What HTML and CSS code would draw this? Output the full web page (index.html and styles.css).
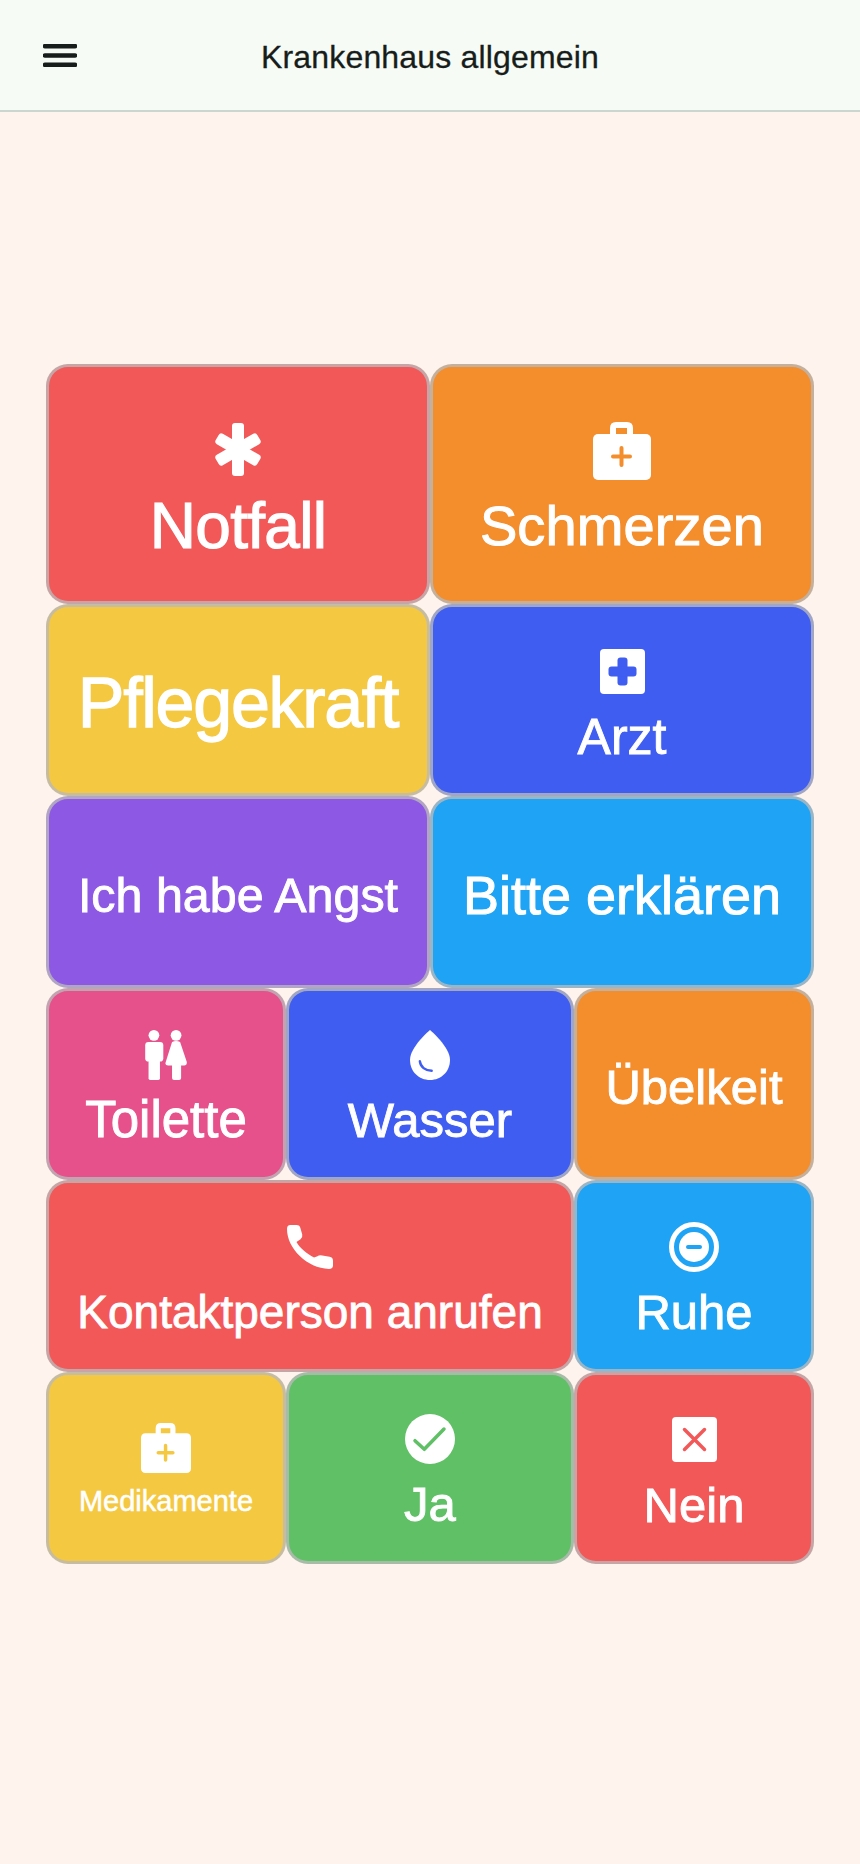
FILE: index.html
```html
<!DOCTYPE html>
<html lang="de">
  <head>
    <meta charset="UTF-8" />
    <meta name="viewport" content="width=device-width, initial-scale=1.0" />
    <title>Krankenhaus allgemein</title>
    <link rel="stylesheet" href="styles.css">
  </head>
  <body>
    <header class="topBar">
      <button type="button" class="menuButton" aria-label="Menü">
        <svg class="menuIcon" viewBox="0 0 34 23">
          <path d="M2 2.2H32M2 11.5H32M2 20.8H32" />
        </svg>
      </button>
      <h1 class="topTitle">Krankenhaus allgemein</h1>
    </header>
    <main>
      <div class="tileGrid">
        <button type="button" class="tile tall half red hasIcon">
          <svg class="icon iconStar" viewBox="0 0 48 53">
            <rect x="18" y="0" width="12" height="53" rx="3" />
            <rect x="18" y="2.5" width="12" height="48" rx="3" transform="rotate(60 24 26.5)" />
            <rect x="18" y="2.5" width="12" height="48" rx="3" transform="rotate(-60 24 26.5)" />
          </svg>
          <span class="label sizeNotfall">Notfall</span>
        </button>
        <button type="button" class="tile tall half orange hasIcon">
          <svg class="icon iconBag" viewBox="0 0 58 58">
            <path class="handle" d="M20 14V6Q20 3 23 3H34Q37 3 37 6V14" />
            <rect x="0" y="12" width="58" height="46" rx="5" />
            <path class="cut" stroke-width="4" stroke-linecap="round" d="M20 34.5H37M28.5 26V43" />
          </svg>
          <span class="label sizeSchmerzen">Schmerzen</span>
        </button>

        <button type="button" class="tile half yellow">
          <span class="label sizePflege">Pflegekraft</span>
        </button>
        <button type="button" class="tile half blue hasIcon">
          <svg class="icon iconSquare" viewBox="0 0 45 45">
            <rect width="45" height="45" rx="4" />
            <rect class="cutFill" x="17.5" y="8.5" width="10" height="28" rx="3" />
            <rect class="cutFill" x="8.5" y="17.5" width="28" height="10" rx="3" />
          </svg>
          <span class="label sizeArzt">Arzt</span>
        </button>

        <button type="button" class="tile half purple">
          <span class="label sizeAngst">Ich habe Angst</span>
        </button>
        <button type="button" class="tile half sky">
          <span class="label sizeBitte">Bitte erklären</span>
        </button>

        <button type="button" class="tile side pink hasIcon">
          <svg class="icon iconToilet" viewBox="0 0 124 149">
            <circle cx="26" cy="16" r="16" />
            <rect x="0" y="36" width="54" height="58" rx="10" />
            <rect x="10" y="60" width="34" height="89" rx="5" />
            <circle cx="92" cy="16" r="16" />
            <path d="M80 36Q92 30 104 36L124 95Q125 106 116 106H107V143Q107 149 101 149H86Q80 149 80 143V106H68Q58 106 61 96Z" />
          </svg>
          <span class="label sizeToilette">Toilette</span>
        </button>
        <button type="button" class="tile middle blue hasIcon">
          <svg class="icon iconDrop" viewBox="0 0 118 147">
            <path d="M59 0C59 0 0 50 0 88C0 122 26 147 59 147C92 147 118 122 118 88C118 50 59 0 59 0Z" />
            <path class="cut" stroke-width="7" stroke-linecap="round" d="M29 92C31 108 45 120 64 120" />
          </svg>
          <span class="label sizeSmall">Wasser</span>
        </button>
        <button type="button" class="tile side orange">
          <span class="label sizeSmall">Übelkeit</span>
        </button>

        <button type="button" class="tile wide red hasIcon">
          <svg class="icon iconPhone" viewBox="0 0 136 130">
            <path d="M10 0H28Q38 0 40 10L45 28Q47 36 40 42L28 50C38 68 58 84 80 96L90 92Q96 88 104 90L126 94Q136 96 136 106V120Q136 130 124 130C60 128 0 70 0 12Q0 0 10 0Z" />
          </svg>
          <span class="label sizeKontakt">Kontaktperson anrufen</span>
        </button>
        <button type="button" class="tile side sky hasIcon">
          <svg class="icon iconRound" viewBox="0 0 50 50">
            <circle class="ring" cx="25" cy="25" r="22.5" />
            <circle cx="25" cy="25" r="15" />
            <path class="cut" stroke-width="4" stroke-linecap="round" d="M19 25H31" />
          </svg>
          <span class="label sizeSmall">Ruhe</span>
        </button>

        <button type="button" class="tile side yellow hasIcon medTile">
          <svg class="icon iconBagSmall" viewBox="0 0 58 58">
            <path class="handle" d="M20 14V6Q20 3 23 3H34Q37 3 37 6V14" />
            <rect x="0" y="12" width="58" height="46" rx="5" />
            <path class="cut" stroke-width="4" stroke-linecap="round" d="M20 34.5H37M28.5 26V43" />
          </svg>
          <span class="label sizeTiny">Medikamente</span>
        </button>
        <button type="button" class="tile middle green hasIcon">
          <svg class="icon iconRound" viewBox="0 0 50 50">
            <circle cx="25" cy="25" r="25" />
            <path class="cut" stroke-width="3.5" stroke-linecap="round" stroke-linejoin="round" d="M10 26.7L19.3 35.3L39 15" />
          </svg>
          <span class="label sizeSmall">Ja</span>
        </button>
        <button type="button" class="tile side red hasIcon">
          <svg class="icon iconSquare" viewBox="0 0 45 45">
            <rect width="45" height="45" rx="4" />
            <path class="cut" stroke-width="3.5" stroke-linecap="round" d="M12.5 12.5L32.5 32.5M32.5 12.5L12.5 32.5" />
          </svg>
          <span class="label sizeSmall">Nein</span>
        </button>
      </div>
    </main>
  </body>
</html>
```

FILE: styles.css
```css
html {
  box-sizing: border-box;
  font-family: "Liberation Sans", Arial, sans-serif;
}

*,
*:before,
*:after {
  box-sizing: inherit;
}

body {
  padding: 0;
  margin: 0;
  min-height: 100vh;
  background-color: #fff3ee;
}

.topBar {
  display: grid;
  grid-template-columns: 1fr auto 1fr;
  align-items: center;
  height: 112px;
  padding: 0 43px;
  background-color: #f6fbf5;
  border-bottom: 2px solid #ccd6d1;
}

.menuButton {
  justify-self: start;
  display: block;
  width: 34px;
  height: 23px;
  margin-top: 1px;
  padding: 0;
  border: none;
  background: none;
}

.menuIcon {
  display: block;
  width: 34px;
  height: 23px;
  fill: none;
  stroke: #171d1a;
  stroke-width: 4.6;
  stroke-linecap: round;
}

.topTitle {
  grid-column: 2;
  margin: 0;
  padding-top: 5px;
  font-size: 32px;
  font-weight: 400;
  letter-spacing: 0.17px;
  color: #171d1a;
  -webkit-text-stroke: 0.3px #171d1a;
}

main {
  padding: 252px 46px 0;
}

.tileGrid {
  display: grid;
  grid-template-columns: repeat(16, 48px);
  grid-template-rows: 240px repeat(5, 192px);
}

.tile {
  display: flex;
  flex-direction: column;
  align-items: center;
  justify-content: center;
  padding: 0;
  border: 3px solid rgba(185, 185, 185, 0.8);
  border-radius: 22px;
  background-color: var(--c);
  color: #fff;
  font-family: inherit;
}

.half {
  grid-column: span 8;
}

.side {
  grid-column: span 5;
}

.middle {
  grid-column: span 6;
}

.wide {
  grid-column: span 11;
}

.hasIcon {
  padding-top: 14px;
}

.tall {
  padding-top: 11px;
}

.medTile {
  padding-top: 10px;
}

.red { --c: #f35859; }
.orange { --c: #f48d2c; }
.yellow { --c: #f5c842; }
.blue { --c: #3f5df1; }
.purple { --c: #8d58e3; }
.sky { --c: #1fa3f5; }
.pink { --c: #e7518b; }
.green { --c: #60c066; }

.icon {
  display: block;
  flex: none;
  margin-bottom: 8px;
  fill: #fff;
}

.cut {
  fill: none;
  stroke: var(--c);
}

.cutFill {
  fill: var(--c);
}

.handle {
  fill: none;
  stroke: #fff;
  stroke-width: 6;
}

.ring {
  fill: none;
  stroke: #fff;
  stroke-width: 5;
}

.iconStar {
  width: 48px;
  height: 53px;
  margin-top: 1px;
  margin-bottom: 18px;
}

.iconBag {
  width: 58px;
  height: 58px;
  margin-bottom: 14px;
}

.iconBagSmall {
  width: 50px;
  height: 50px;
  margin-bottom: 6px;
}

.iconSquare {
  width: 45px;
  height: 45px;
  margin-top: 3px;
  margin-bottom: 11px;
}

.iconToilet {
  width: 42px;
  height: 50px;
}

.iconDrop {
  width: 40px;
  height: 50px;
}

.iconPhone {
  width: 46px;
  height: 44px;
  margin-top: 3px;
  margin-bottom: 11px;
}

.iconRound {
  width: 50px;
  height: 50px;
}

.label {
  display: block;
  line-height: 64px;
  white-space: nowrap;
  -webkit-text-stroke: 0.018em #fff;
}

.tile:not(.hasIcon) .label {
  padding-top: 6px;
}

.sizeNotfall { font-size: 64px; letter-spacing: -0.7px; }
.sizeSchmerzen { font-size: 56px; letter-spacing: 0.1px; }
.sizePflege { font-size: 70px; letter-spacing: -1.3px; }
.sizeArzt { font-size: 50px; }
.sizeAngst { font-size: 48.4px; }
.sizeBitte { font-size: 54px; }
.sizeSmall { font-size: 49px; }
.sizeToilette { font-size: 51px; }
.sizeKontakt { font-size: 46px; }
.sizeTiny { font-size: 29px; line-height: 44px; }
```
